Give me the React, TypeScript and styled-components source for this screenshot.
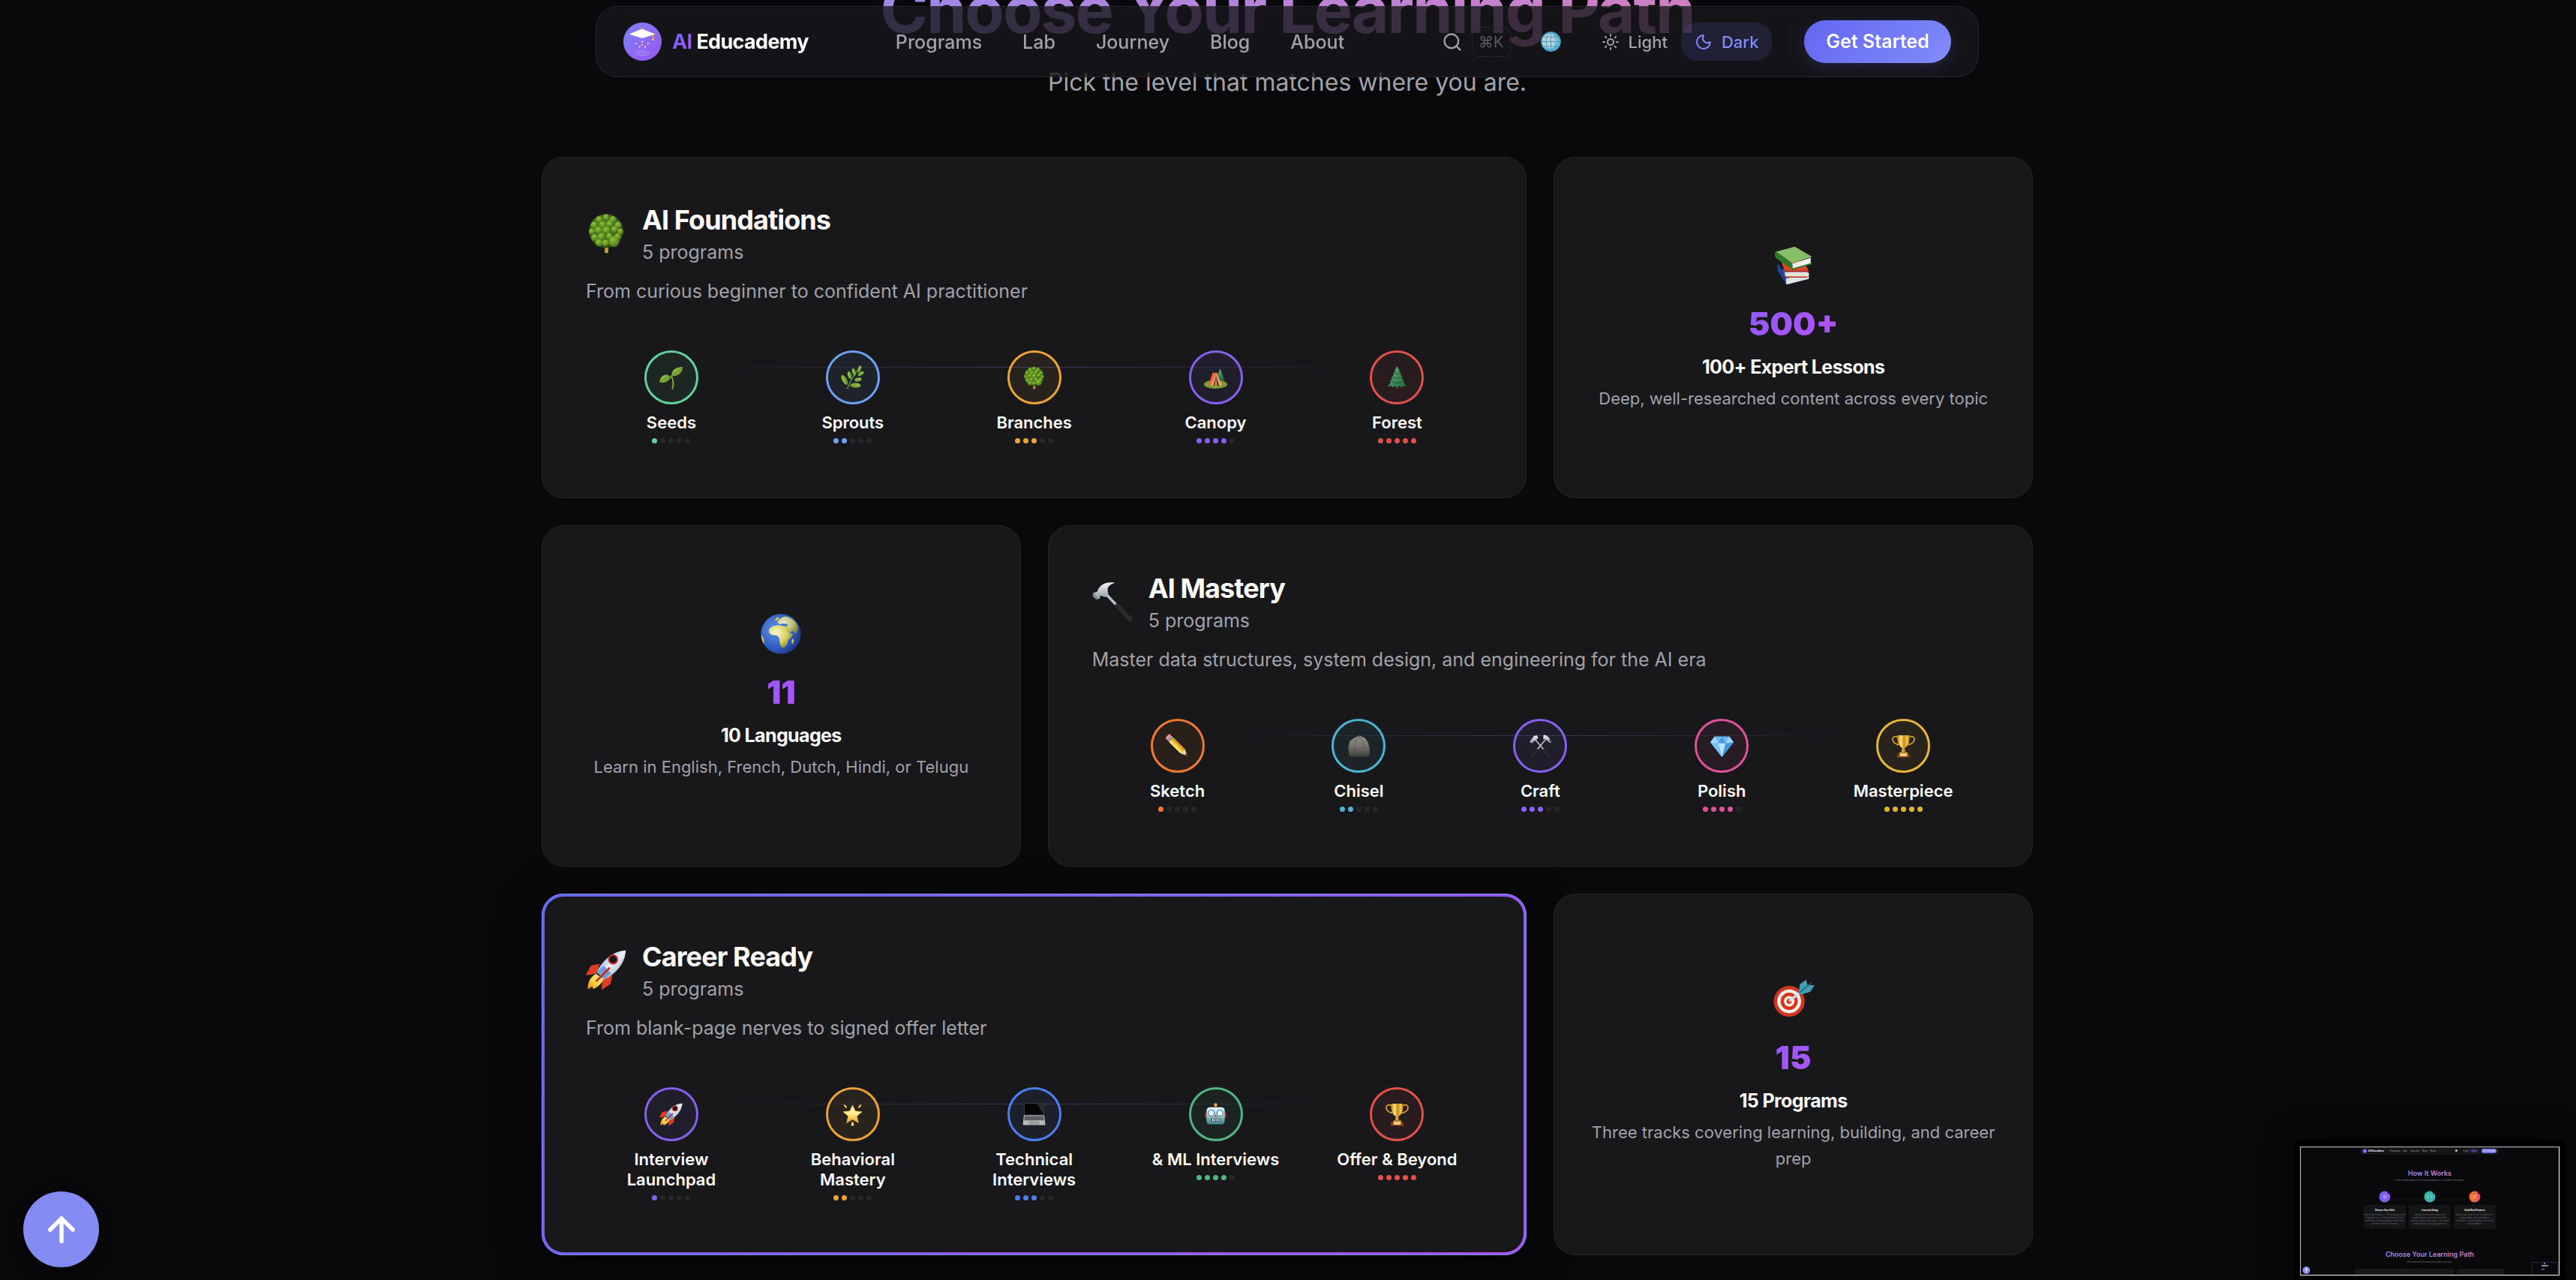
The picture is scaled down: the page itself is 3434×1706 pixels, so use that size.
import React from 'react';
import styled, { createGlobalStyle, css } from 'styled-components';
import { ArrowUp, Moon, Search, Sun } from 'lucide-react';

/* ---------- emoji drawings, all on a 32 x 32 canvas ---------- */

const SharedGradients = () => (
  <HiddenSvg aria-hidden="true">
    <defs>
      <radialGradient id="leafBall" cx="0.4" cy="0.3" r="0.8">
        <stop offset="0" stopColor="#94c23a" />
        <stop offset="0.6" stopColor="#5f8f22" />
        <stop offset="1" stopColor="#34570f" />
      </radialGradient>
      <radialGradient id="canopy" cx="0.42" cy="0.35" r="0.65">
        <stop offset="0" stopColor="#5b8a20" />
        <stop offset="1" stopColor="#2c4a12" />
      </radialGradient>
      <linearGradient id="leaf" x1="0" y1="0" x2="1" y2="1">
        <stop offset="0" stopColor="#a6cf4c" />
        <stop offset="1" stopColor="#55892a" />
      </linearGradient>
      <linearGradient id="pine" x1="0" y1="0" x2="1" y2="1">
        <stop offset="0" stopColor="#67b779" />
        <stop offset="1" stopColor="#23633a" />
      </linearGradient>
      <radialGradient id="sea" cx="0.35" cy="0.4" r="0.75">
        <stop offset="0" stopColor="#5c93e6" />
        <stop offset="0.6" stopColor="#2f5cc0" />
        <stop offset="1" stopColor="#1c2a66" />
      </radialGradient>
      <radialGradient id="land" cx="0.3" cy="0.35" r="0.8">
        <stop offset="0" stopColor="#fffbd2" />
        <stop offset="0.55" stopColor="#d9d162" />
        <stop offset="1" stopColor="#7f8430" />
      </radialGradient>
      <linearGradient id="steel" x1="0" y1="0" x2="0" y2="1">
        <stop offset="0" stopColor="#f4f6fa" />
        <stop offset="1" stopColor="#8c949e" />
      </linearGradient>
      <linearGradient id="gold" x1="0" y1="0" x2="1" y2="0">
        <stop offset="0" stopColor="#b57c1c" />
        <stop offset="0.3" stopColor="#ffe27a" />
        <stop offset="0.55" stopColor="#c88a1e" />
        <stop offset="0.8" stopColor="#f6c94b" />
        <stop offset="1" stopColor="#9a6412" />
      </linearGradient>
      <linearGradient id="hull" x1="0" y1="0" x2="1" y2="1">
        <stop offset="0" stopColor="#5f93d4" />
        <stop offset="0.5" stopColor="#e9eef5" />
        <stop offset="1" stopColor="#8294ad" />
      </linearGradient>
      <linearGradient id="flame" x1="1" y1="0" x2="0" y2="1">
        <stop offset="0" stopColor="#fff6a0" />
        <stop offset="0.6" stopColor="#f8cf3d" />
        <stop offset="1" stopColor="#ef7d1f" />
      </linearGradient>
      <linearGradient id="starFill" x1="0" y1="0" x2="0" y2="1">
        <stop offset="0" stopColor="#fffbe0" />
        <stop offset="0.5" stopColor="#ffeb86" />
        <stop offset="1" stopColor="#e29a2c" />
      </linearGradient>
      <linearGradient id="rock" x1="0" y1="0" x2="0" y2="1">
        <stop offset="0" stopColor="#94938b" />
        <stop offset="0.55" stopColor="#74736c" />
        <stop offset="1" stopColor="#3c3c38" />
      </linearGradient>
      <linearGradient id="robotFace" x1="0" y1="0" x2="0" y2="1">
        <stop offset="0" stopColor="#e8f7fa" />
        <stop offset="0.5" stopColor="#96c4d0" />
        <stop offset="1" stopColor="#3f7d92" />
      </linearGradient>
    </defs>
  </HiddenSvg>
);

const bumps: [number, number, number][] = [
  [16, 3.4, 2.6], [10.6, 5.2, 2.8], [21.4, 5.2, 2.8], [6.6, 9.6, 2.8], [25.4, 9.6, 2.8],
  [13.2, 9.2, 2.8], [18.8, 8.6, 2.8], [4.8, 14.6, 2.5], [27.2, 14.6, 2.5], [10, 13.6, 3],
  [22.6, 13, 2.8], [16.2, 13.6, 3.2], [7, 19.4, 2.8], [12.4, 18.6, 3], [18.6, 18.4, 2.8],
  [25, 18.8, 2.8], [10.4, 23.4, 3], [15.6, 23.6, 2.8], [22.2, 22.6, 4.2],
];

const Tree = () => (
  <>
    <rect x="14.900" y="26" width="2.800" height="5.600" rx="0.600" fill="#c39d4a" />
    <ellipse cx="16" cy="14.200" rx="13.600" ry="13.400" fill="url(#canopy)" />
    {bumps.map(([x, y, r]) => (
      <circle key={`${x}-${y}`} cx={x} cy={y} r={r} fill="url(#leafBall)" />
    ))}
  </>
);

const Seedling = () => (
  <>
    <path d="M18 31c1.800-6 1.400-12-1.500-17" fill="none" stroke="#7fae35" strokeWidth="2" strokeLinecap="round" />
    <path d="M17 14C16 6 22 1 32 1c0 8-6 13-15 13z" fill="url(#leaf)" />
    <path d="M16 15C9 9 2 12 0 22c8 2 13-1 16-7z" fill="url(#leaf)" />
    <path d="M18 13c4-5 8-8 12-10M2 21c4-4 8-6 13-6" stroke="#4c7d1f" strokeWidth="0.6" fill="none" />
  </>
);

const Herb = () => (
  <g fill="url(#leaf)">
    <path d="M9 31C12 22 18 12 26 2" fill="none" stroke="#6c9c37" strokeWidth="1.400" strokeLinecap="round" />
    <ellipse cx="25.500" cy="4" rx="2.200" ry="5" transform="rotate(22 25.500 4)" />
    <ellipse cx="18" cy="8" rx="2.300" ry="5" transform="rotate(-18 18 8)" />
    <ellipse cx="12" cy="12.500" rx="2.600" ry="5.600" transform="rotate(-18 12 12.500)" />
    <ellipse cx="5" cy="19" rx="3.200" ry="7.400" transform="rotate(-28 5 19)" />
    <ellipse cx="27.500" cy="10.500" rx="2.300" ry="4.600" transform="rotate(58 27.500 10.500)" />
    <ellipse cx="23.500" cy="18.500" rx="2.600" ry="5" transform="rotate(78 23.500 18.500)" />
    <ellipse cx="20" cy="26.500" rx="3.300" ry="7.200" transform="rotate(92 20 26.500)" />
  </g>
);

const Pine = () => (
  <>
    <rect x="14.600" y="26" width="3" height="5.500" fill="#5a3a20" />
    <path
      d="M16 0l3.500 6-1.600-.4 4 5.600-2-.3 4.200 5.600-2.200-.2 4.600 5.600-2.200-.2L29 28.400l-5-1.300-1.500 2.200-3.500-1.900-3 2-3-2-3.400 1.900L8 27.200l-5 1.200 4.600-6.700-2.100.2 4.400-5.600-2.100.2 4.100-5.600-1.900.3 3.900-5.600-1.500.4z"
      fill="url(#pine)"
    />
    <path d="M12 9l4 2 4-1.500M10 15l5 2 7-2M8 21l7 2.500 9-2.500" stroke="#1c4d2b" strokeWidth="1" fill="none" />
  </>
);

const Tent = () => (
  <>
    <ellipse cx="16" cy="25" rx="16" ry="6" fill="#7d9b35" />
    <path d="M22 3l2.500 5-1-.2 3 5-1.400-.2 3.400 6H17l2.500-6-1 .2 2-5z" fill="url(#pine)" />
    <path d="M20 14l8 6h-8z" fill="#2b6a3d" />
    <path d="M12 9h6l5 16-7 1.500H6z" fill="#e8663f" />
    <path d="M17 9l8 17-5 .6L15.500 14 13 26.500H9z" fill="#f39a6c" />
    <path d="M16.500 12l4 14.500h-7z" fill="#4b2418" />
    <path d="M16.500 12l1 14.500h-2z" fill="#f7d774" />
  </>
);

const Books = () => (
  <>
    <path d="M3 19l20-1 6 5-19 7.500z" fill="#2d4fb0" />
    <path d="M9 26.500l19-5v5L10.500 31z" fill="#dfe3e8" />
    <path d="M3 17l7 13.500v-4.500L4 14z" fill="#23418f" />
    <path d="M6 12l18 0 4 8.500H9z" fill="#e0452c" />
    <path d="M9 21h18.500l-1 4H9.500z" fill="#e6e2dc" />
    <path d="M9 20.500h19M9 25h18" stroke="#b42a19" strokeWidth="0.900" />
    <path d="M2 5L17 1l13.500 8-15.500 5z" fill="#86bf68" />
    <path d="M2 5c-1.300 1.500-1 3.500 0 5l12.500 9 .5-5z" fill="#2e7a2a" />
    <path d="M15 14.500l14.500-4.700v4.500L15.500 18z" fill="#eef0ec" />
    <path d="M14.500 19.200l16-4.900" stroke="#2e7a2a" strokeWidth="1" />
  </>
);

const Earth = () => (
  <>
    <circle cx="16" cy="16" r="15.800" fill="url(#sea)" />
    <path d="M6.500 13c1-2.800 4-4 8-4 2 .6 4 .8 6 .9l2.500 5.500 2.500.3c-.5 2.200-2.200 3.800-3.800 5.400-.2 2.700-1.800 5.400-4.200 5.700-2.200-.5-2.600-4.200-2.700-6.900-.4-1.300-1.400-3-3.200-3-3 .2-5.400-1-5.100-3.900z" fill="url(#land)" />
    <path d="M13 7c1-2.200 3-4.200 6.500-5 5 .8 8.800 4 10.400 9l-2 5.500-2.400-3-2.600 1.400-2.400-4.800 1-1.800-4-.6-2.400.8z" fill="url(#land)" opacity="0.850" />
    <path d="M11 5l2-2.400 1.600.4-1.200 2.400zM25 19.500l1.400 1.600-1.200 3-.9-1.800zM1 17c1.600 2 2 4.500 1.600 7A15.500 15.500 0 0 1 .4 17z" fill="#d9c545" />
  </>
);

const Hammer = () => (
  <>
    <path d="M18 17l12 13" stroke="#2b2b2e" strokeWidth="3.600" strokeLinecap="round" />
    <path d="M10.500 9.500l8 8.500" stroke="#b7c4d6" strokeWidth="2" />
    <path d="M18 1C11 0 6 2 3.800 8.200L.6 9.200v2.600l2.800 2.600 2.400-.7.700-2.600 4.300 1.300 2-2.800C11 5 13 2.500 18 1z" fill="url(#steel)" />
    <path d="M.6 9.200l3.400 4.800" stroke="#6c747e" strokeWidth="0.800" />
  </>
);

const Pencil = () => (
  <g transform="rotate(-45 16 16)">
    <rect x="12" y="-4" width="8.500" height="5" rx="2.500" fill="#ee8d8a" />
    <rect x="12" y="0" width="8.500" height="4" fill="#8f9bab" />
    <path d="M12 4h8.500v22H12z" fill="#f4c033" />
    <path d="M12 4h3v22h-3z" fill="#fbe07a" />
    <path d="M18 4h2.500v22H18z" fill="#d4951c" />
    <path d="M12 26h8.500l-4.200 9.500z" fill="#f0cf9c" />
    <path d="M14.700 32h3.200l-1.600 3.800z" fill="#333" />
  </g>
);

const Rock = () => (
  <>
    <path d="M1.500 18l2-9 7-5 6-2.500 7.500 3 4.500 6 2.500 9.500-.5 9-3 1.500H6L2.500 29z" fill="url(#rock)" />
    <path d="M1.500 18l9 2 12-2 8.500 2M10.500 20l1-11 5-7M23 18l-1.500-9-5-7M10.500 20l1 10" stroke="#55544e" strokeWidth="0.900" fill="none" />
  </>
);

const HammerPick = () => (
  <>
    <path d="M16 16L4 30M16 16l12 14" stroke="#2c2c2f" strokeWidth="2.800" strokeLinecap="round" />
    <path d="M24 6L12 20M8 6l12 14" stroke="#b9c0c9" strokeWidth="1.600" />
    <path d="M1 10l6-8 4-1 2 4-4 3-5 4z" fill="url(#steel)" />
    <path d="M20 1l3-.5 5 4 3 7-3.500-1L23 6l-3 1z" fill="url(#steel)" />
    <path d="M27.500 6l3.500 5.500-3.500-1z" fill="#a5795f" />
  </>
);

const Gem = () => (
  <>
    <path d="M6 2.500h20l6 8L16 31 0 10.500z" fill="#6cb8f2" />
    <path d="M6 2.500L11 12 0 10.500zM26 2.500L21 12l11-1.500z" fill="#9fd6fb" />
    <path d="M11 12L16 2.500 21 12z" fill="#4c97dd" />
    <path d="M11 12h10l-5 19z" fill="#bfe5fd" />
    <path d="M0 10.500L11 12l5 19z" fill="#7cc4f5" />
    <path d="M32 10.500L21 12l-5 19z" fill="#4796e0" />
  </>
);

const Trophy = () => (
  <>
    <path d="M8 3.500C1 1 0 6 2 9.500c1.600 3 4.500 4 7.500 4.500M24 3.500C31 1 32 6 30 9.500c-1.600 3-4.500 4-7.500 4.500" fill="none" stroke="#d6a02c" strokeWidth="1.800" />
    <path d="M7.500 1h17c.6 8-1.500 14.500-6.700 17.500l.7 5.500h-5l.7-5.500C9 15.500 6.900 9 7.500 1z" fill="url(#gold)" />
    <path d="M11 24h10l1.400 3H9.600z" fill="#c98b22" />
    <path d="M8 26h16l1.500 5.500h-19z" fill="#8c3b14" />
    <path d="M11 26h10v4H11z" fill="#f1d489" />
  </>
);

const Rocket = () => (
  <>
    <path d="M11 11L4 12.500 0 20l8-1zM21 20l-1.500 7-7 4.500L13 23z" fill="#e23d22" />
    <path d="M31.500.5C22 1 14 7 8.500 17.500l6 6C25 18 31 10 31.500.5z" fill="url(#hull)" />
    <path d="M14 12.500l6 6-5.500 5-6-6z" fill="#5d8fd0" opacity="0.850" />
    <circle cx="21.500" cy="7.500" r="4" fill="#c5281e" />
    <circle cx="21.500" cy="7.500" r="2.700" fill="#15161c" />
    <path d="M8 19c-4 2-6.500 6-6.500 12 2-.8 3-2 3.500-2l1 2c4-2 6.500-4.500 8-8z" fill="url(#flame)" />
    <path d="M18.500 14.500l-10 10" stroke="#c5281e" strokeWidth="1.600" strokeLinecap="round" />
  </>
);

const GlowStar = () => (
  <>
    <path d="M16 3l3.800 8.200 9.200.9-7 6.100 2.200 9.300L16 22.700l-8.200 4.800L10 18.200l-7-6.100 9.200-.9z" fill="url(#starFill)" stroke="#f3b93b" strokeWidth="0.600" strokeLinejoin="round" />
    <path d="M4 2c2 .3 4 2.500 4.500 5C6 7 4 5 4 2zM28 2c-2 .3-4 2.500-4.500 5C26 7 28 5 28 2zM16 25c1.600 2 2 4.500 1.800 6.500h-3.600C14 29.500 14.400 27 16 25z" fill="#f6cf55" />
  </>
);

const Laptop = () => (
  <>
    <rect x="2" y="0" width="28" height="17" rx="1" fill="#3a3a3c" />
    <rect x="3" y="1" width="26" height="15" fill="#050506" />
    <path d="M20 1h9v15z" fill="#2a2b2e" />
    <path d="M2 17h28l1.500 13.500H.5z" fill="#b9babc" />
    <path d="M3 18h26l.6 6H2.400z" fill="#5b5c5f" />
    <rect x="9" y="25" width="14" height="4.500" fill="#9a9b9e" />
  </>
);

const Robot = () => (
  <>
    <rect x="14.400" y="2" width="3.200" height="5" fill="#7c4a9c" />
    <circle cx="16" cy="2.500" r="2.300" fill="#f2a53a" />
    <rect x="1.500" y="13" width="29" height="8" rx="2.500" fill="#c8372c" />
    <rect x="3.500" y="6" width="25" height="23.500" rx="4.500" fill="url(#robotFace)" />
    <circle cx="10" cy="14" r="4" fill="#fff" stroke="#3a97b4" strokeWidth="1.400" />
    <circle cx="22" cy="14" r="4" fill="#fff" stroke="#3a97b4" strokeWidth="1.400" />
    <path d="M16 15.500l2 4h-4z" fill="#e2533a" />
    <rect x="9.500" y="21.500" width="13" height="4" rx="1" fill="#23343a" />
    <path d="M11 22h2v3h-2zM14 22h1.600v3H14zM17 22h1.600v3H17zM19.800 22h1.600v3h-1.600z" fill="#f4f7f8" />
  </>
);

const Target = () => (
  <>
    <circle cx="12.500" cy="17.500" r="12.200" fill="#d3361f" />
    <circle cx="12.500" cy="17.500" r="9.400" fill="#f4efe9" />
    <circle cx="12.500" cy="17.500" r="6.800" fill="#d3361f" />
    <circle cx="12.500" cy="17.500" r="4.200" fill="#f4efe9" />
    <circle cx="12.500" cy="17.500" r="2" fill="#d3361f" />
    <path d="M12.500 17.500L24 8" stroke="#d8dde2" strokeWidth="1.800" />
    <path d="M20 11l1-7 5-3.500.8 4 5.700.5-3.500 5-6.500 2z" fill="#3f9fb4" />
    <path d="M20 11l10-8" stroke="#1e6678" strokeWidth="1" />
  </>
);

const WebGlobe = () => (
  <>
    <circle cx="16" cy="16" r="15.500" fill="#5fb3d6" />
    <circle cx="14" cy="15" r="12" fill="#e9ebe4" opacity="0.600" />
    <g fill="none" stroke="#4a9cc2" strokeWidth="1.200">
      <circle cx="16" cy="16" r="15" />
      <ellipse cx="16" cy="16" rx="7.500" ry="15" />
      <path d="M16 1v30M1 16h30M3.500 8.500h25M3.500 23.500h25" />
    </g>
  </>
);

const drawings = {
  tree: Tree, seedling: Seedling, herb: Herb, pine: Pine, tent: Tent, books: Books,
  earth: Earth, hammer: Hammer, pencil: Pencil, rock: Rock, hammerPick: HammerPick,
  gem: Gem, trophy: Trophy, rocket: Rocket, star: GlowStar, laptop: Laptop,
  robot: Robot, target: Target, webGlobe: WebGlobe,
};
type EmojiName = keyof typeof drawings;

const Emoji = ({ name, size }: { name: EmojiName; size: number }) => {
  const Drawing = drawings[name];
  return (
    <EmojiSvg width={size} height={size} viewBox="0 0 32 32" aria-hidden="true">
      <Drawing />
    </EmojiSvg>
  );
};

const LogoMark = () => (
  <svg width="51" height="51" viewBox="0 0 51 51" aria-hidden="true">
    <defs>
      <linearGradient id="logoFill" x1="0" y1="0" x2="1" y2="1">
        <stop offset="0" stopColor="#7c83f5" />
        <stop offset="1" stopColor="#9a55f3" />
      </linearGradient>
    </defs>
    <circle cx="25.500" cy="25.500" r="25.500" fill="url(#logoFill)" />
    <path d="M7.500 15.500L25 8.500l17.500 7L25 21z" fill="#fff" />
    <path d="M39.500 16v6" stroke="#f5b93a" strokeWidth="1.200" />
    <circle cx="39.500" cy="22.500" r="1.500" fill="#f5b93a" />
    <circle cx="25" cy="8.500" r="1.500" fill="#f5b93a" />
    <g fill="#fff" opacity="0.900">
      <circle cx="25" cy="25.500" r="1" />
      <circle cx="17" cy="28" r="1" />
      <circle cx="33" cy="28" r="1" />
      <circle cx="21.500" cy="32.500" r="1" />
      <circle cx="29" cy="32.500" r="1" />
    </g>
    <circle cx="25" cy="30" r="1.300" fill="#f5b93a" />
    <g fill="none" stroke="#c9b4fb" strokeWidth="0.700" opacity="0.600">
      <rect x="15" y="38" width="20" height="5.500" rx="2.700" />
      <rect x="20" y="38" width="10" height="5.500" rx="2.700" />
      <path d="M18 40.700h14" />
    </g>
  </svg>
);

/* ---------- styles ---------- */

const GlobalStyle = createGlobalStyle`
  *, *::before, *::after { box-sizing: border-box; }
  body {
    margin: 0;
    background: #09090b;
    color: #fafafa;
    font-family: Inter, "Liberation Sans", sans-serif;
  }
  h2, h3, p, ol { margin: 0; padding: 0; }
  button { border: 0; background: none; font: inherit; color: inherit; padding: 0; cursor: pointer; }
  a { color: inherit; text-decoration: none; }
`;

const HiddenSvg = styled.svg`
  position: absolute;
  width: 0;
  height: 0;
`;

const EmojiSvg = styled.svg`
  display: block;
  flex: none;
  overflow: visible;
`;

const Page = styled.div`
  height: 100vh;
  overflow: hidden;
  padding-right: 2px;
`;

const NavBar = styled.header`
  position: fixed;
  z-index: 10;
  top: 8px;
  left: 0;
  right: 2px;
  max-width: 1844px;
  margin: 0 auto;
  padding: 18px 36px;
  display: flex;
  align-items: center;
  justify-content: space-between;
  border: 1px solid rgba(255, 255, 255, 0.07);
  border-radius: 29px;
  background: rgba(24, 24, 27, 0.8);
`;

const Brand = styled.a`
  display: flex;
  align-items: center;
  gap: 14px;
  font-size: 27px;
  font-weight: 700;
  letter-spacing: -0.025em;
`;

const BrandName = styled.span`
  display: flex;
  gap: 6px;
`;

const BrandAccent = styled.span`
  background: linear-gradient(135deg, #6366f1, #a855f7);
  -webkit-background-clip: text;
  background-clip: text;
  color: transparent;
`;

const NavLinks = styled.nav`
  display: flex;
`;

const NavLink = styled.a`
  padding: 10px 27px;
  font-size: 25px;
  line-height: 30px;
  font-weight: 500;
  color: #a1a1aa;
`;

const NavTools = styled.div`
  display: flex;
  align-items: center;
  gap: 4px;
`;

const SearchButton = styled.button`
  display: flex;
  align-items: center;
  gap: 12px;
  padding: 0 10px 0 14px;
  color: #a1a1aa;
`;

const Shortcut = styled.kbd`
  padding: 6px 8px;
  border: 1px solid #27272a;
  border-radius: 9px;
  font-family: Inter, "DejaVu Sans", sans-serif;
  font-size: 20px;
  line-height: 26px;
  color: #5b5b63;
`;

const LanguageButton = styled.button`
  padding: 10px 32px 10px 26px;
`;

const ThemeSwitch = styled.div`
  display: flex;
`;

const ThemeButton = styled.button<{ $active?: boolean }>`
  display: flex;
  align-items: center;
  gap: 12px;
  height: 51px;
  padding: 0 18px;
  border-radius: 22px;
  font-size: 22px;
  font-weight: 500;
  color: ${(p) => (p.$active ? '#818cf8' : '#a1a1aa')};
  ${(p) => p.$active && css`background: rgba(99, 102, 241, 0.15);`}
`;

const Divider = styled.span`
  width: 1px;
  height: 36px;
  margin: 0 14px 0 20px;
  background: #232326;
`;

const StartButton = styled.a`
  padding: 0 29px;
  border-radius: 29px;
  font-size: 25px;
  line-height: 57px;
  font-weight: 600;
  color: #ffffff;
  background: linear-gradient(135deg, #6366f1, #818cf8);
  box-shadow: 0 4px 18px rgba(99, 102, 241, 0.2);
`;

/* The section is shown scrolled, with its heading partly above the window. */
const Section = styled.main`
  max-width: 1988px;
  margin: -39px auto 0;
`;

const SectionTitle = styled.h2`
  width: fit-content;
  margin: 0 auto;
  font-size: 86px;
  line-height: 104px;
  font-weight: 700;
  letter-spacing: -0.025em;
  text-align: center;
  background: linear-gradient(90deg, #9f87e8, #b884d8 50%, #d07fc0);
  -webkit-background-clip: text;
  background-clip: text;
  color: transparent;
`;

const SectionLead = styled.p`
  margin-top: 19px;
  font-size: 32px;
  line-height: 52px;
  text-align: center;
  color: #a1a1aa;
`;

const Bento = styled.div`
  display: grid;
  grid-template-columns: repeat(3, 1fr);
  gap: 36px;
  margin-top: 73px;
`;

const cardBase = css`
  border: 1px solid #242427;
  border-radius: 29px;
  background: #18181b;
`;

const TrackCard = styled.article<{ $featured?: boolean }>`
  ${cardBase}
  grid-column: span 2;
  padding: 58px;
  ${(p) =>
    p.$featured &&
    css`
      padding: 55px;
      border: 4px solid transparent;
      background:
        linear-gradient(#18181b, #18181b) padding-box,
        linear-gradient(135deg, #6366f1, #a855f7) border-box;
      outline: 1px solid #7f86f3;
      outline-offset: -1px;
      box-shadow: 0 14px 58px rgba(0, 0, 0, 0.6);
    `}
`;

const TrackHeader = styled.header`
  display: flex;
  align-items: center;
  gap: 21px;
`;

const TrackTitle = styled.h3`
  font-size: 36px;
  line-height: 50px;
  font-weight: 700;
  letter-spacing: -0.025em;
`;

const TrackCount = styled.p`
  font-size: 25px;
  line-height: 36px;
  color: #a1a1aa;
`;

const TrackSummary = styled.p`
  margin-top: 16px;
  font-size: 25px;
  line-height: 36px;
  color: #a1a1aa;
`;

const Steps = styled.ol<{ $line: string }>`
  position: relative;
  display: grid;
  grid-template-columns: repeat(5, 1fr);
  gap: 14px;
  margin-top: 36px;
  padding: 25px 0 14px;
  list-style: none;

  &::before {
    content: '';
    position: absolute;
    top: 47px;
    left: 10%;
    right: 10%;
    height: 1px;
    background: linear-gradient(90deg, transparent 4%, ${(p) => p.$line} 50%, transparent 96%);
  }
`;

const Step = styled.li`
  display: flex;
  flex-direction: column;
  align-items: center;
`;

const StepBadge = styled.div<{ $color: string }>`
  position: relative;
  display: flex;
  align-items: center;
  justify-content: center;
  width: 72px;
  height: 72px;
  border: 3px solid ${(p) => p.$color};
  border-radius: 50%;
  background: ${(p) => p.$color}14;
`;

const StepLabel = styled.span`
  max-width: 180px;
  margin-top: 11px;
  font-size: 22px;
  line-height: 27px;
  font-weight: 600;
  text-align: center;
`;

const Dots = styled.div`
  display: flex;
  gap: 4px;
  margin-top: 7px;
`;

const Dot = styled.span<{ $color: string }>`
  width: 7px;
  height: 7px;
  border-radius: 50%;
  background: ${(p) => p.$color};
`;

const StatCard = styled.article`
  ${cardBase}
  display: flex;
  flex-direction: column;
  align-items: center;
  justify-content: center;
  padding: 43px;
  text-align: center;
`;

const StatIcon = styled.div`
  padding: 2px 0 6px;
`;

const StatValue = styled.p`
  width: 100%;
  margin-top: 18px;
  font-size: 43px;
  line-height: 52px;
  font-weight: 900;
  background: linear-gradient(135deg, #6366f1, #a855f7 55%, #ec4899);
  -webkit-background-clip: text;
  background-clip: text;
  color: transparent;
`;

const StatTitle = styled.h3`
  margin-top: 14px;
  font-size: 25px;
  line-height: 36px;
  font-weight: 700;
  letter-spacing: -0.025em;
`;

const StatText = styled.p`
  margin-top: 7px;
  font-size: 22px;
  line-height: 35px;
  color: #a1a1aa;
`;

const ScrollTop = styled.button`
  position: fixed;
  z-index: 10;
  left: 31px;
  bottom: 17px;
  display: flex;
  align-items: center;
  justify-content: center;
  width: 101px;
  height: 101px;
  border-radius: 50%;
  color: #ffffff;
  background: #848cf3;
  box-shadow: 0 7px 22px rgba(0, 0, 0, 0.4);
`;

const PreviewButton = styled.button`
  position: fixed;
  z-index: 10;
  right: 22px;
  bottom: 6px;
  border-radius: 2px;
  box-shadow: 0 0 0 8px #000000, 0 0 40px 8px rgba(0, 0, 0, 0.6);

  svg { display: block; }
`;

/* ---------- page preview ---------- */

const previewSteps = [
  { x: 113, fill: 'url(#pvViolet)', title: 'Choose Your Path', lines: ['Pick from 3 tracks — AI Learning, Craft', 'Engineering, or Career Ready. Each', 'track has curated programs that take', 'you from zero to mastery.'] },
  { x: 173, fill: 'url(#pvTeal)', title: 'Learn by Doing', lines: ['Interactive lessons, hands-on', 'experiments, and real code. No', 'passive video watching — you build', 'understanding through practice.'] },
  { x: 233, fill: 'url(#pvOrange)', title: 'Build Real Projects', lines: ['Apply your skills in our AI Lab with 7', 'experiments. Build chatbots,', 'classifiers, and AI agents that solve', 'real problems.'] },
];

const PagePreview = () => (
  <svg width="346" height="172" viewBox="0 0 346 172" role="img" aria-label="Page preview">
    <defs>
      <linearGradient id="pvTitle"><stop offset="0" stopColor="#9a8cf0" /><stop offset="1" stopColor="#d07fc0" /></linearGradient>
      <linearGradient id="pvViolet"><stop offset="0" stopColor="#6a63f3" /><stop offset="1" stopColor="#9a55f3" /></linearGradient>
      <linearGradient id="pvTeal"><stop offset="0" stopColor="#3fb886" /><stop offset="1" stopColor="#3faed0" /></linearGradient>
      <linearGradient id="pvOrange"><stop offset="0" stopColor="#f0802c" /><stop offset="1" stopColor="#ea4a55" /></linearGradient>
    </defs>
    <rect width="346" height="172" fill="#09090b" />
    <rect x="80" y="2" width="186" height="9" rx="3" fill="#151518" />
    <circle cx="86.500" cy="6" r="2.600" fill="#8f6cf4" />
    <g fontSize="3" fill="#a1a1aa">
      <text x="91" y="7" fill="#ffffff" fontWeight="700">AI Educademy</text>
      <text x="120" y="7">Programs</text>
      <text x="137" y="7">Lab</text>
      <text x="147" y="7">Journey</text>
      <text x="163" y="7">Blog</text>
      <text x="173" y="7">About</text>
      <text x="218" y="7">Light</text>
    </g>
    <circle cx="208.500" cy="5.500" r="1.500" fill="#a8d8ea" />
    <rect x="226" y="3" width="12" height="6" rx="2" fill="#20203a" />
    <text x="229" y="7" fontSize="3" fill="#818cf8">Dark</text>
    <rect x="242" y="3" width="20" height="6" rx="3" fill="#7479f4" />
    <text x="252" y="7" fontSize="3" fill="#ffffff" textAnchor="middle">Get Started</text>
    <g textAnchor="middle">
      <text x="173" y="39" fontSize="9" fontWeight="600" fill="url(#pvTitle)">How It Works</text>
      <text x="173" y="46" fontSize="3" fill="#77777f">Three simple steps from curious beginner to confident AI builder</text>
      <path d="M122 71h100" stroke="#27272a" strokeWidth="1" strokeDasharray="2 2" />
      {previewSteps.map((s) => (
        <React.Fragment key={s.title}>
          <circle cx={s.x} cy="67" r="7.500" fill={s.fill} />
          <circle cx={s.x + 6} cy="61" r="2.200" fill="#0c0c10" />
          <rect x={s.x - 28} y="78" width="56" height="32" rx="3" fill="#151518" />
          <text x={s.x} y="86" fontSize="3" fontWeight="700" fill="#fafafa">{s.title}</text>
          {s.lines.map((line, i) => (
            <text key={line} x={s.x} y={92 + i * 4} fontSize="3" fill="#6b6b73">{line}</text>
          ))}
        </React.Fragment>
      ))}
      <circle cx="113" cy="67" r="2.300" fill="none" stroke="#d4ccff" strokeWidth="0.600" />
      <path d="M112 68.200l.5-1.700 1.700-.6-.6 1.700z" fill="#d4ccff" />
      <path d="M171.500 65.300l-1.700 1.700 1.700 1.700M174.500 65.300l1.700 1.700-1.700 1.700" fill="none" stroke="#d5f5ee" strokeWidth="0.600" />
      <path d="M231 69l1-2.500 3.300-1.800-1.500 3.300zM231 66.500l1-1M233.500 69l1-1" fill="none" stroke="#ffe1d5" strokeWidth="0.600" />
      <text x="173" y="147" fontSize="9" fontWeight="600" fill="url(#pvTitle)">Choose Your Learning Path</text>
      <text x="173" y="155" fontSize="3" fill="#77777f">Pick the level that matches where you are.</text>
    </g>
    <path d="M73 171v-5a3 3 0 0 1 3-3h126a3 3 0 0 1 3 3v5zM209 171v-5a3 3 0 0 1 3-3h58a3 3 0 0 1 3 3v5z" fill="#18181b" />
    <circle cx="8.500" cy="165" r="5" fill="#848cf3" />
    <path d="M8.500 167.500v-5M6.500 164.500l2-2 2 2" fill="none" stroke="#fff" strokeWidth="0.900" />
    <path d="M309.500 171v-16.500h34V171" fill="#08080a" stroke="#2a2a2e" strokeWidth="1" />
    <circle cx="326" cy="156" r="1.200" fill="#7479f4" />
    <rect x="322" y="158" width="9" height="2" fill="#8a8a92" />
    <rect x="322" y="163" width="4" height="1.500" fill="#6b55e0" />
    <path d="M0 .5h346M.5 0v172" stroke="#a8a8a8" strokeWidth="1.500" />
    <path d="M345.500 1v170.500H1" fill="none" stroke="#ffffff" strokeWidth="1" />
  </svg>
);

/* ---------- content ---------- */

type StepData = { label: string; icon: EmojiName; color: string };
type TrackData = { title: string; summary: string; icon: EmojiName; line: string; featured?: boolean; steps: StepData[] };
type StatData = { icon: EmojiName; value: string; title: string; text: string };

const foundations: TrackData = {
  title: 'AI Foundations',
  summary: 'From curious beginner to confident AI practitioner',
  icon: 'tree',
  line: '#3a3760',
  steps: [
    { label: 'Seeds', icon: 'seedling', color: '#66cf9b' },
    { label: 'Sprouts', icon: 'herb', color: '#6ba1f5' },
    { label: 'Branches', icon: 'tree', color: '#eba236' },
    { label: 'Canopy', icon: 'tent', color: '#8660ef' },
    { label: 'Forest', icon: 'pine', color: '#e1504b' },
  ],
};

const mastery: TrackData = {
  title: 'AI Mastery',
  summary: 'Master data structures, system design, and engineering for the AI era',
  icon: 'hammer',
  line: '#33395c',
  steps: [
    { label: 'Sketch', icon: 'pencil', color: '#ee7b30' },
    { label: 'Chisel', icon: 'rock', color: '#4bb3d2' },
    { label: 'Craft', icon: 'hammerPick', color: '#8660ef' },
    { label: 'Polish', icon: 'gem', color: '#dc5198' },
    { label: 'Masterpiece', icon: 'trophy', color: '#e4b53b' },
  ],
};

const career: TrackData = {
  title: 'Career Ready',
  summary: 'From blank-page nerves to signed offer letter',
  icon: 'rocket',
  line: '#3a3760',
  featured: true,
  steps: [
    { label: 'Interview Launchpad', icon: 'rocket', color: '#8660ef' },
    { label: 'Behavioral Mastery', icon: 'star', color: '#eba236' },
    { label: 'Technical Interviews', icon: 'laptop', color: '#4a80ee' },
    { label: '& ML Interviews', icon: 'robot', color: '#52b584' },
    { label: 'Offer & Beyond', icon: 'trophy', color: '#e1504b' },
  ],
};

const Track = ({ track }: { track: TrackData }) => (
  <TrackCard $featured={track.featured}>
    <TrackHeader>
      <Emoji name={track.icon} size={54} />
      <div>
        <TrackTitle>{track.title}</TrackTitle>
        <TrackCount>{track.steps.length} programs</TrackCount>
      </div>
    </TrackHeader>
    <TrackSummary>{track.summary}</TrackSummary>
    <Steps $line={track.line}>
      {track.steps.map((step, index) => (
        <Step key={step.label}>
          <StepBadge $color={step.color}>
            <Emoji name={step.icon} size={31} />
          </StepBadge>
          <StepLabel>{step.label}</StepLabel>
          <Dots>
            {track.steps.map((other, i) => (
              <Dot key={other.label} $color={i <= index ? step.color : '#27272a'} />
            ))}
          </Dots>
        </Step>
      ))}
    </Steps>
  </TrackCard>
);

const Stat = ({ icon, value, title, text }: StatData) => (
  <StatCard>
    <StatIcon>
      <Emoji name={icon} size={54} />
    </StatIcon>
    <StatValue>{value}</StatValue>
    <StatTitle>{title}</StatTitle>
    <StatText>{text}</StatText>
  </StatCard>
);

export default function App() {
  return (
    <Page>
      <GlobalStyle />
      <SharedGradients />
      <NavBar>
        <Brand href="#home">
          <LogoMark />
          <BrandName>
            <BrandAccent>AI</BrandAccent>
            <span>Educademy</span>
          </BrandName>
        </Brand>
        <NavLinks>
          {['Programs', 'Lab', 'Journey', 'Blog', 'About'].map((name) => (
            <NavLink key={name} href={`#${name.toLowerCase()}`}>{name}</NavLink>
          ))}
        </NavLinks>
        <NavTools>
          <SearchButton aria-label="Search">
            <Search size={28} strokeWidth={2} />
            <Shortcut>⌘K</Shortcut>
          </SearchButton>
          <LanguageButton aria-label="Language">
            <Emoji name="webGlobe" size={27} />
          </LanguageButton>
          <ThemeSwitch>
            <ThemeButton>
              <Sun size={24} strokeWidth={2} />
              Light
            </ThemeButton>
            <ThemeButton $active aria-pressed="true">
              <Moon size={24} strokeWidth={2} />
              Dark
            </ThemeButton>
          </ThemeSwitch>
          <Divider />
          <StartButton href="#start">Get Started</StartButton>
        </NavTools>
      </NavBar>

      <Section>
        <SectionTitle>Choose Your Learning Path</SectionTitle>
        <SectionLead>Pick the level that matches where you are.</SectionLead>
        <Bento>
          <Track track={foundations} />
          <Stat icon="books" value="500+" title="100+ Expert Lessons" text="Deep, well-researched content across every topic" />
          <Stat icon="earth" value="11" title="10 Languages" text="Learn in English, French, Dutch, Hindi, or Telugu" />
          <Track track={mastery} />
          <Track track={career} />
          <Stat icon="target" value="15" title="15 Programs" text="Three tracks covering learning, building, and career prep" />
        </Bento>
      </Section>

      <ScrollTop aria-label="Back to top">
        <ArrowUp size={52} strokeWidth={2.5} />
      </ScrollTop>
      <PreviewButton aria-label="Open page preview">
        <PagePreview />
      </PreviewButton>
    </Page>
  );
}
